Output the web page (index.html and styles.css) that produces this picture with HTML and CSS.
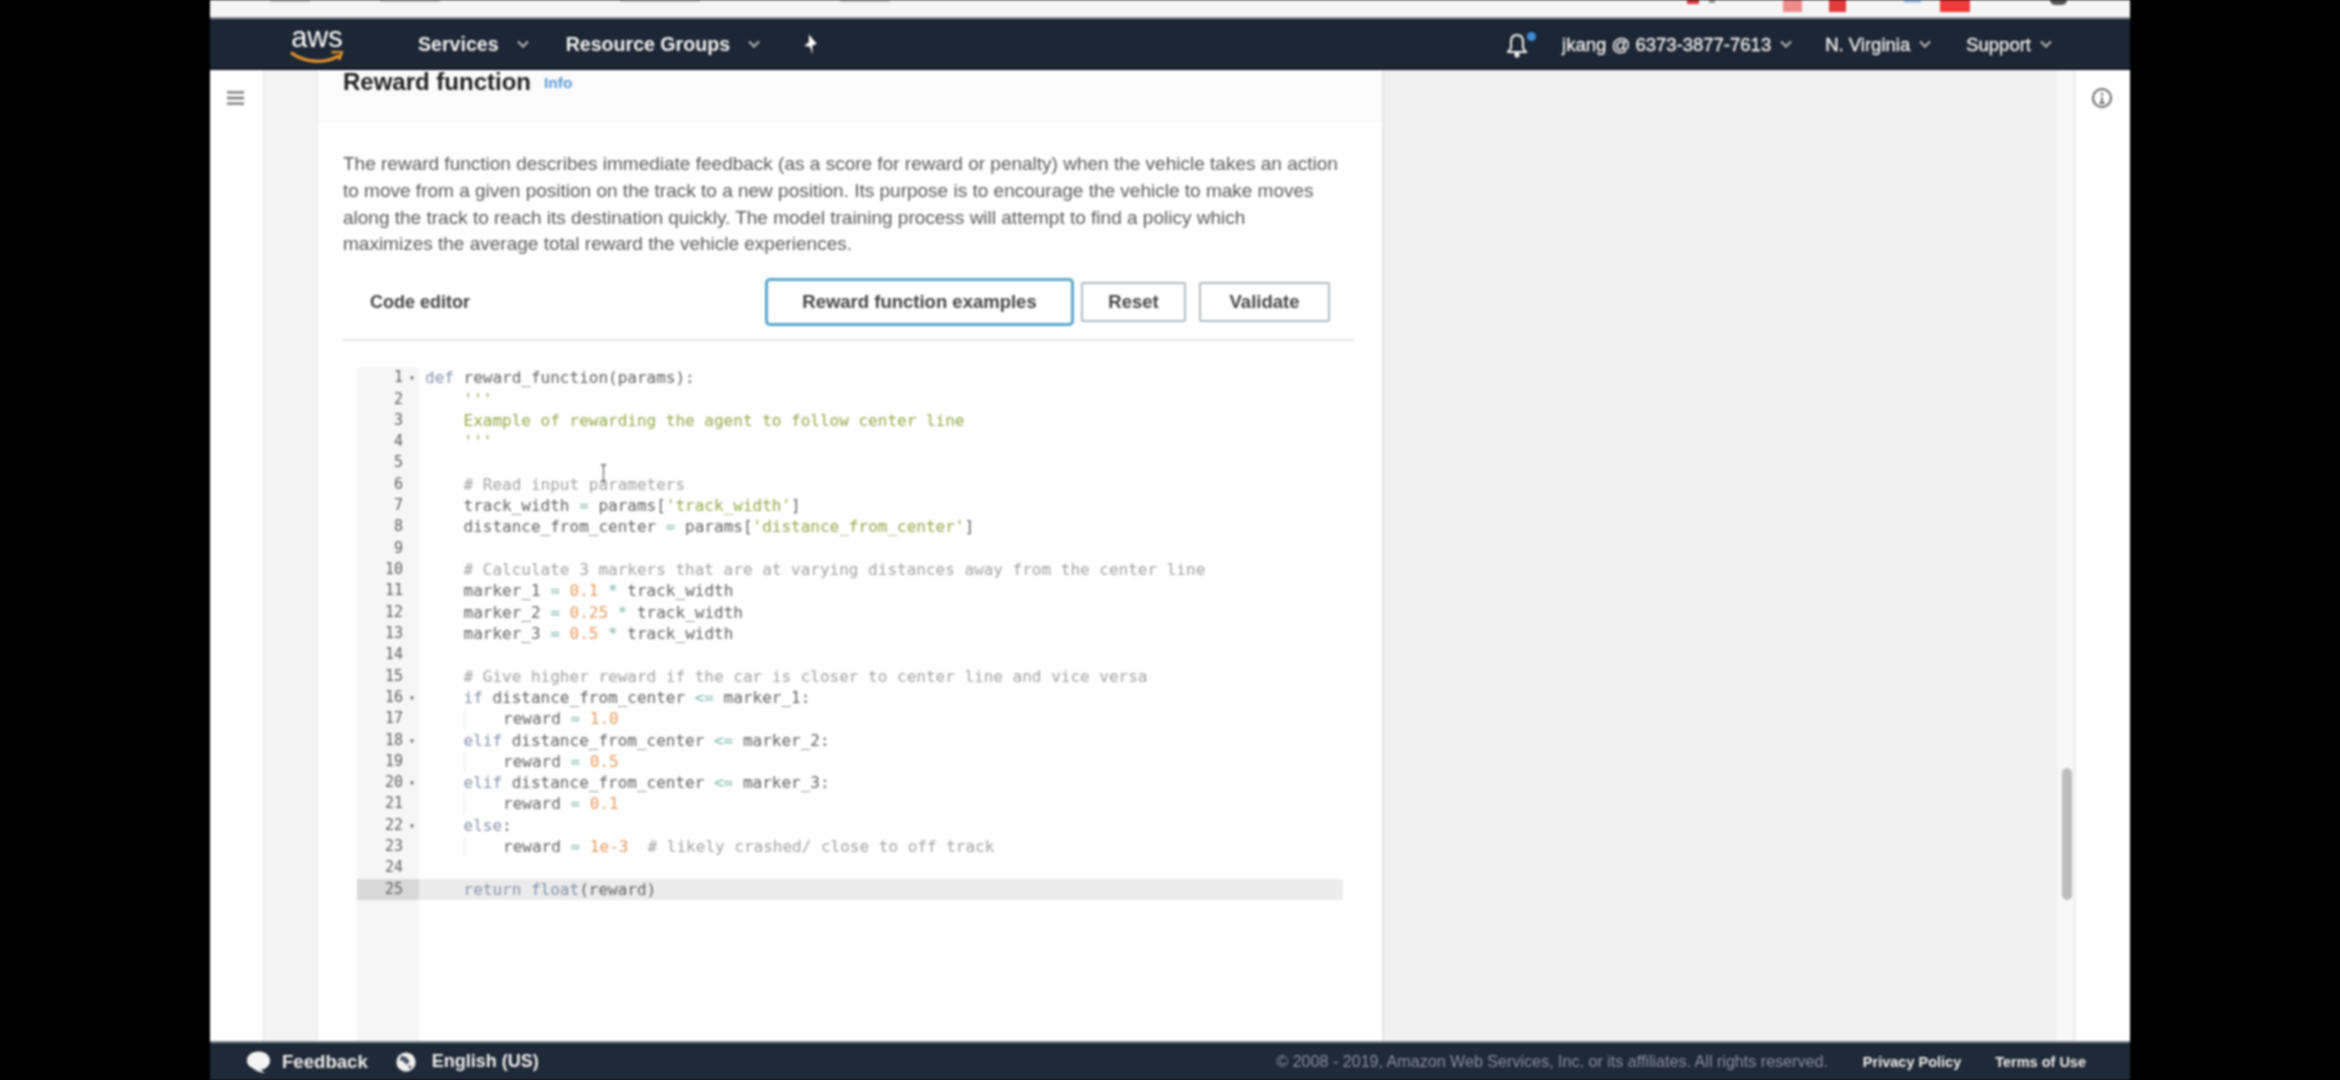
FILE: index.html
```html
<!DOCTYPE html>
<html lang="en">
<head>
<meta charset="utf-8">
<title>Reward function</title>
<link rel="stylesheet" href="styles.css">
</head>
<body>
<div class="screen">
  <div class="browser-strip">
    <span class="tick t1"></span><span class="tick t2"></span><span class="tick t3"></span><span class="tick t4"></span>
    <span class="spacer"></span>
    <span class="tab-icon red-s"></span><span class="tab-icon grey-s"></span><span class="tab-icon pink"></span><span class="tab-icon red-n"></span><span class="tab-icon blue"></span><span class="tab-icon red-w"></span><span class="tab-icon dark"></span>
  </div>
  <header class="nav">
    <div class="logo">
      <span class="logo-text">aws</span>
      <svg class="smile" viewBox="0 0 56 14"><path d="M2 2c14 10 34 11 48 3" fill="none" stroke="#e8952c" stroke-width="3.2" stroke-linecap="round"/><path d="M43 1l11-1-3 9" fill="none" stroke="#e8952c" stroke-width="2.6"/></svg>
    </div>
    <a class="nav-item services">Services<i class="caret"></i></a>
    <a class="nav-item groups">Resource Groups<i class="caret"></i></a>
    <svg class="pin" viewBox="0 0 16 20"><path d="M7 1l4 5 3 3-4 2v8l-2-7-5-1 4-3z" fill="#fff"/></svg>
    <span class="spacer"></span>
    <span class="bell-wrap">
      <svg class="bell" viewBox="0 0 20 26"><path d="M10 3c-4 0-6 3-6 7v6l-3 4h18l-3-4v-6c0-4-2-7-6-7z" fill="none" stroke="#f2f2f2" stroke-width="2"/><circle cx="10" cy="23" r="2.6" fill="#f2f2f2"/></svg>
      <i class="bell-dot"></i>
    </span>
    <a class="nav-item light account">jkang @ 6373-3877-7613<i class="caret"></i></a>
    <a class="nav-item light region">N. Virginia<i class="caret"></i></a>
    <a class="nav-item light support">Support<i class="caret"></i></a>
  </header>
  <div class="content">
    <aside class="side-left">
      <svg class="burger" viewBox="0 0 18 16"><path d="M0 2h18M0 8h18M0 14h18" stroke="#777" stroke-width="2.4"/></svg>
    </aside>
    <div class="strip"></div>
    <main class="panel">
      <div class="panel-head">
        <h2>Reward function</h2><a class="info">Info</a>
      </div>
      <div class="panel-body">
        <p class="desc">The reward function describes immediate feedback (as a score for reward or penalty) when the vehicle takes an action<br>to move from a given position on the track to a new position. Its purpose is to encourage the vehicle to make moves<br>along the track to reach its destination quickly. The model training process will attempt to find a policy which<br>maximizes the average total reward the vehicle experiences.</p>
        <div class="toolbar">
          <span class="tool-title">Code editor</span>
          <button class="btn focus">Reward function examples</button>
          <button class="btn reset">Reset</button>
          <button class="btn validate">Validate</button>
        </div>
        <div class="editor">
          <div class="gutter">
            <div class="num fold">1</div><div class="num">2</div><div class="num">3</div><div class="num">4</div><div class="num">5</div><div class="num">6</div><div class="num">7</div><div class="num">8</div><div class="num">9</div><div class="num">10</div><div class="num">11</div><div class="num">12</div><div class="num">13</div><div class="num">14</div><div class="num">15</div><div class="num fold">16</div><div class="num">17</div><div class="num fold">18</div><div class="num">19</div><div class="num fold">20</div><div class="num">21</div><div class="num fold">22</div><div class="num">23</div><div class="num">24</div><div class="num current">25</div>
          </div>
          <div class="code">
            <div class="line"><span class="kw">def</span> reward_function(params):</div>
            <div class="line">    <span class="str">'''</span></div>
            <div class="line">    <span class="str">Example of rewarding the agent to follow center line</span></div>
            <div class="line">    <span class="str">'''</span></div>
            <div class="line"> </div>
            <div class="line">    <span class="cm"># Read input parameters</span></div>
            <div class="line">    track_width <span class="op">=</span> params[<span class="str">'track_width'</span>]</div>
            <div class="line">    distance_from_center <span class="op">=</span> params[<span class="str">'distance_from_center'</span>]</div>
            <div class="line"> </div>
            <div class="line">    <span class="cm"># Calculate 3 markers that are at varying distances away from the center line</span></div>
            <div class="line">    marker_1 <span class="op">=</span> <span class="nb">0.1</span> <span class="op">*</span> track_width</div>
            <div class="line">    marker_2 <span class="op">=</span> <span class="nb">0.25</span> <span class="op">*</span> track_width</div>
            <div class="line">    marker_3 <span class="op">=</span> <span class="nb">0.5</span> <span class="op">*</span> track_width</div>
            <div class="line"> </div>
            <div class="line">    <span class="cm"># Give higher reward if the car is closer to center line and vice versa</span></div>
            <div class="line">    <span class="kw">if</span> distance_from_center <span class="op">&lt;=</span> marker_1:</div>
            <div class="line">    <span class="guide"></span>    reward <span class="op">=</span> <span class="nb">1.0</span></div>
            <div class="line">    <span class="kw">elif</span> distance_from_center <span class="op">&lt;=</span> marker_2:</div>
            <div class="line">    <span class="guide"></span>    reward <span class="op">=</span> <span class="nb">0.5</span></div>
            <div class="line">    <span class="kw">elif</span> distance_from_center <span class="op">&lt;=</span> marker_3:</div>
            <div class="line">    <span class="guide"></span>    reward <span class="op">=</span> <span class="nb">0.1</span></div>
            <div class="line">    <span class="kw">else</span>:</div>
            <div class="line">    <span class="guide"></span>    reward <span class="op">=</span> <span class="nb">1e-3</span>  <span class="cm"># likely crashed/ close to off track</span></div>
            <div class="line"> </div>
            <div class="line current">    <span class="kw">return</span> <span class="fn">float</span>(reward)</div>
          </div>
          <svg class="ibeam" viewBox="0 0 10 20"><path d="M2 1h6M5 1v18M2 19h6" fill="none" stroke="#555" stroke-width="1.2"/></svg>
        </div>
      </div>
    </main>
    <div class="backdrop">
      <div class="scroll-thumb"></div>
    </div>
    <aside class="side-right">
      <svg class="info-icon" viewBox="0 0 22 22"><circle cx="11" cy="11" r="9" fill="none" stroke="#666" stroke-width="2"/><path d="M11 10v6M8.500 16h5" stroke="#666" stroke-width="1.800" fill="none"/><circle cx="11" cy="7" r="1.300" fill="#666"/></svg>
    </aside>
  </div>
  <footer class="foot">
    <svg class="foot-bubble" viewBox="0 0 26 24"><path d="M13 1c7 0 12 4 12 9.500S20 20 15 20l5 3c-5 0-9-1-12-4-4-1.500-7-4.500-7-8.500C1 5 6 1 13 1z" fill="#f4f4f4"/></svg>
    <a class="foot-item feedback">Feedback</a>
    <svg class="foot-globe" viewBox="0 0 24 24"><circle cx="12" cy="12" r="10.500" fill="#f0f0f0"/><path d="M7 5l6 2 3 5-4 3-3-4-4-1zM14 17l4-2-1 5z" fill="#4a5361"/></svg>
    <a class="foot-item lang">English (US)</a>
    <span class="spacer"></span>
    <span class="copy">© 2008 - 2019, Amazon Web Services, Inc. or its affiliates. All rights reserved.</span>
    <a class="foot-item privacy">Privacy Policy</a>
    <a class="foot-item terms">Terms of Use</a>
  </footer>
</div>
</body>
</html>
```
FILE: styles.css
```css
* { box-sizing: border-box; }
html, body { margin: 0; height: 100%; background: #000; overflow: hidden; }
body { font-family: "Liberation Sans", Arial, sans-serif; }
.screen {
  width: 1920px; height: 1080px; margin-left: 210px;
  display: flex; flex-direction: column; background: #fff; filter: blur(0.9px);
}
.spacer { flex: 1; }

.browser-strip {
  height: 19px; background: #f5f5f5; display: flex; align-items: flex-start;
  border-bottom: 2px solid #8c9196; flex: none;
}
.tick { height: 2px; background: #c4c4c4; display: block; }
.t1 { width: 40px; margin-left: 60px; }
.t2 { width: 60px; margin-left: 70px; }
.t3 { width: 80px; margin-left: 180px; }
.t4 { width: 50px; margin-left: 140px; }
.tab-icon { display: block; flex: none; }
.red-s { width: 12px; height: 4px; background: #d8383c; margin-right: 10px; }
.grey-s { width: 6px; height: 3px; background: #999; margin-right: 68px; }
.pink { width: 19px; height: 12px; background: #ef8a8a; margin-right: 27px; }
.red-n { width: 17px; height: 12px; background: #e23b3b; margin-right: 58px; }
.blue { width: 17px; height: 3px; background: #a8c8e8; margin-right: 19px; }
.red-w { width: 30px; height: 12px; background: #ee3a3a; margin-right: 80px; }
.dark { width: 17px; height: 5px; background: #555; border-radius: 0 0 9px 9px; margin-right: 63px; }

.nav {
  height: 51px; flex: none; background: #1c2735; color: #f2f2f2;
  display: flex; align-items: center; position: relative;
  border-bottom: 2px solid #0b1220; padding-top: 2px;
}
.logo { width: 54px; margin-left: 80px; height: 44px; display: flex; flex-direction: column; align-items: center; }
.logo-text { display: block; font-size: 29px; line-height: 28px; color: #fff; }
.smile { width: 54px; height: 14px; display: block; flex: none; }
.nav-item { font-size: 19.600px; font-weight: bold; white-space: nowrap; display: flex; align-items: center; }
.caret {
  display: block; width: 8px; height: 8px; border-right: 2px solid #bbb; border-bottom: 2px solid #bbb;
  transform: rotate(45deg) translate(-2px, -2px); margin-left: 20px;
}
.services { margin-left: 74px; }
.groups { margin-left: 39px; }
.pin { width: 18px; height: 23px; margin-left: 43px; }
.light { font-weight: normal; font-size: 18.500px; -webkit-text-stroke: .3px #f2f2f2; }
.bell-wrap { position: relative; width: 22px; height: 26px; margin-right: 33px; }
.bell { width: 20px; height: 26px; display: block; }
.bell-dot { position: absolute; width: 9px; height: 9px; border-radius: 50%; background: #3f88d8; right: -7px; top: 0; }
.region { margin-left: 35px; }
.support { margin-left: 37px; margin-right: 80px; }
.light .caret { margin-left: 11px; }

.content { flex: 1; display: flex; min-height: 0; overflow: hidden; }
.side-left { width: 53px; flex: none; background: #fff; padding: 20px 0 0 17px; }
.burger { width: 17px; height: 16px; display: block; }
.strip { width: 55px; flex: none; background: #f3f3f3; border-left: 1px solid #e2e2e2; border-right: 1px solid #ededed; }
.panel { width: 1066px; flex: none; background: #fff; border-right: 2px solid #e4e4e4; overflow: hidden; display: flex; flex-direction: column; }
.panel-head {
  height: 52px; flex: none; background: #fbfbfb; display: flex; align-items: flex-start;
  padding: 0 0 0 25px; border-bottom: 1px solid #f6f6f6;
}
h2 { margin: 0; font-size: 24px; line-height: 24px; color: #222; font-weight: bold; }
.info { color: #5d9bd4; font-size: 15.500px; line-height: 26px; margin-left: 13px; font-weight: bold; }
.panel-body { padding: 29px 27px 0 25px; flex: 1; display: flex; flex-direction: column; min-height: 0; }
.desc { margin: 0; font-size: 19px; line-height: 26.8px; color: #5a5a5a; white-space: nowrap; }
.toolbar {
  margin-top: 21px; height: 62px; padding: 0 25px 14px 27px; border-bottom: 2px solid #e8e8e8;
  display: flex; align-items: center; gap: 13px; flex: none;
}
.tool-title { font-size: 18px; font-weight: bold; color: #444; margin-right: auto; }
.btn {
  font: bold 18.500px "Liberation Sans", Arial, sans-serif; color: #444; background: #fff;
  border: 2px solid #b4b9bd; border-radius: 2px; height: 40px; padding: 0;
}
.focus { width: 303px; height: 42px; margin-right: -3px; box-shadow: 0 0 0 3px #5aa8cc; border-color: #fff; }
.reset { width: 105px; }
.validate { width: 131px; }

.editor {
  display: flex; margin: 26px 0 0 14px; width: 986px; flex: 1; min-height: 0; position: relative;
  font: 16px/21.32px "DejaVu Sans Mono", monospace; color: #626262;
}
.gutter { width: 62px; flex: none; background: #f6f6f6; }
.num { height: 21.32px; padding-right: 16px; text-align: right; color: #626262; position: relative; font-size: 15px; }
.num.fold::after { content: "▾"; position: absolute; right: 4px; top: 0; font-size: 10px; color: #666; }
.num.current { background: #d8d8d8; }
.code { flex: 1; padding: 0; }
.line { height: 21.32px; padding-left: 6px; white-space: pre; position: relative; }
.line.current { background: #ebebeb; }
.kw { color: #8a93ad; }
.fn { color: #7d8fa8; }
.str { color: #96a84a; }
.cm { color: #a2a2a2; }
.nb { color: #ea9a5c; }
.op { color: #7bb9a8; }
.guide { display: inline-block; width: 0; height: 21px; border-left: 1px solid #ececec; vertical-align: top; }
.ibeam { position: absolute; left: 242px; top: 97px; width: 9px; height: 18px; }

.backdrop { flex: 1; background: #f0f0f0; position: relative; border-right: 16px solid #f8f8f8; }
.scroll-thumb { position: absolute; right: -15px; top: 698px; width: 10px; height: 132px; background: #bdbdbd; border-radius: 5px; }
.side-right { width: 57px; flex: none; background: #fff; border-left: 3px solid #efefef; padding: 17px 0 0 15px; }
.info-icon { width: 22px; height: 22px; display: block; }

.foot {
  height: 39px; flex: none; background: #1f2a38; color: #eee; display: flex; align-items: center;
  border-top: 2px solid #7d8590;
}
.foot-bubble { width: 25px; height: 24px; margin-left: 36px; }
.foot-item { font-weight: bold; white-space: nowrap; font-size: 18.600px; }
.feedback { margin-left: 11px; }
.foot-globe { width: 22px; height: 22px; margin-left: 27px; }
.lang { margin-left: 15px; font-size: 18px; }
.copy { color: #8a919b; white-space: nowrap; font-size: 16.100px; }
.foot-item.privacy { margin-left: 35px; font-size: 14.500px; }
.foot-item.terms { margin-left: 34px; margin-right: 44px; font-size: 14.500px; }
```
